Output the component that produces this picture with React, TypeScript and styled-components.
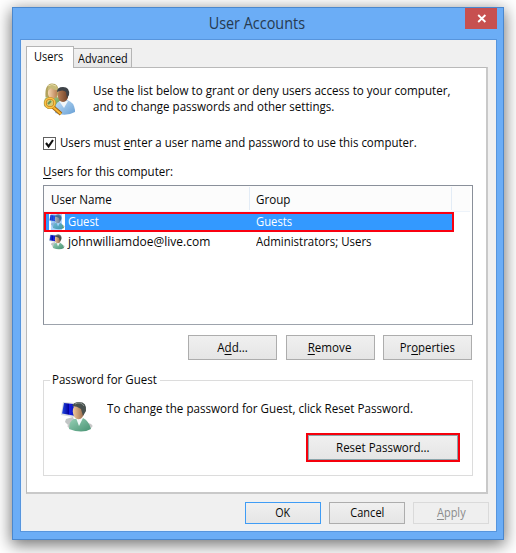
import React from 'react';
import styled, { createGlobalStyle, css } from 'styled-components';

const Page = createGlobalStyle`
  * { box-sizing: border-box; }
  body { margin: 0; background: #fff; overflow: hidden; }
  u { text-decoration-thickness: 1px; text-underline-offset: 2px; }
`;

const Desktop = styled.div`
  width: 516px;
  height: 553px;
  padding: 7px 0 0 12px;
  font: 12.5px/16px 'Open Sans', 'Noto Sans', sans-serif;
  color: #080808;
  white-space: nowrap;
  overflow: hidden;
`;

const Window = styled.div`
  width: 492px;
  height: 533px;
  display: flex;
  flex-direction: column;
  padding: 0 6px 7px 7px;
  background: #6badf6;
  border: 1px solid #4a87cd;
  box-shadow: 0 4px 15px 1px rgba(0, 0, 0, 0.55);
`;

const TitleBar = styled.header`
  height: 31px;
  display: grid;
  grid-template-columns: 1fr auto 1fr;
  align-items: start;
`;

const Title = styled.h1`
  grid-column: 2;
  margin: 0;
  padding: 4px 4px 0 0;
  font-size: 15.5px;
  font-weight: 400;
  line-height: 22px;
  color: #263a50;
`;

const Close = styled.button`
  justify-self: end;
  width: 32px;
  height: 21px;
  padding: 0 0 0 1px;
  border: 0;
  background: #c75050;
  display: flex;
  align-items: center;
  justify-content: center;
`;

const Client = styled.main`
  flex: 1;
  display: flex;
  flex-direction: column;
  padding: 6px 7px 0 5px;
  background: #f0f0f0;
  border: 1px solid #5795dd;
  box-shadow: inset 1px -1px #e9f1f9;
`;

const Tabs = styled.nav`
  display: flex;
  align-items: flex-end;
  height: 22px;
  position: relative;
  z-index: 1;
`;

const Tab = styled.div<{ $active?: boolean }>`
  border: 1px solid #b5b5b5;
  ${p => p.$active ? css`
    width: 48px;
    height: 22px;
    padding: 2px 0 0 7px;
    border-bottom: 0;
    background: #fff;
  ` : css`
    width: 58px;
    height: 20px;
    padding: 2px 0 0 4px;
    border-left: 0;
    background: linear-gradient(#f1f1f1, #e8e8e8);
  `}
`;

const Panel = styled.section`
  width: 462px;
  height: 427px;
  margin-top: -1px;
  padding: 15px 0 0 16px;
  background: #fff;
  border: 1px solid #b9b9b9;
  border-right: 2px solid #c9c9c9;
  border-bottom: 2px solid #c9c9c9;
`;

/* Condensed run of text: the installed face is wider than the dialog's UI font. */
const Text = styled.span<{ $scale?: number; $centered?: boolean }>`
  display: inline-block;
  width: max-content;
  transform: scaleX(${p => p.$scale ?? 0.93});
  transform-origin: ${p => p.$centered ? 'center' : 'left'};
`;

const Intro = styled.div`
  display: flex;
  gap: 17px;
  height: 53px;
`;

const IntroCopy = styled.p`
  margin: 0;
  display: flex;
  flex-direction: column;
  line-height: 15.5px;
`;

const CheckRow = styled.div`
  display: flex;
  align-items: center;
  gap: 4px;
  height: 14px;
`;

const CheckBox = styled.span`
  width: 13px;
  height: 13px;
  border: 1px solid #606060;
  background: #fff;
  display: flex;
`;

const ListLabel = styled.div`
  margin-top: 14px;
  height: 21px;
  line-height: 16px;
`;

const UserList = styled.div`
  width: 430px;
  height: 140px;
  border: 1px solid #8a909a;
  border-bottom-color: #9da3ac;
`;

const columns = css`
  display: grid;
  grid-template-columns: 205px 1fr;
  align-items: center;
`;

const ListHeader = styled.div`
  ${columns}
  height: 26px;
  margin-right: 2px;
  padding-left: 1px;
  background: #fcfcfc;
  border-bottom: 1px solid #edf3fa;
`;

const HeaderCell = styled.div`
  height: 23px;
  padding: 5px 0 0 6px;
  border-right: 1px solid #e3ecf6;
  &:last-child { margin-right: 18px; }
`;

const UserRow = styled.div<{ $selected?: boolean }>`
  ${columns}
  width: 410px;
  height: 20px;
  padding-left: ${p => p.$selected ? 3 : 5}px;
  color: ${p => p.$selected ? '#fff' : '#080808'};
  background: ${p => p.$selected ? '#3399ff' : '#fff'};
  border: ${p => p.$selected ? '2px solid #fa0010' : '0'};
`;

const UserCell = styled.div`
  display: flex;
  align-items: center;
  gap: 3px;
  height: 16px;
`;

const GroupCell = styled.div`
  padding-left: 2px;
`;

const Actions = styled.div`
  display: flex;
  justify-content: flex-end;
  gap: 8.5px;
  width: 429px;
  margin-top: 10px;
`;

const Button = styled.button<{ $w: number; $h: number; $kind?: 'default' | 'disabled' | 'marked' }>`
  width: ${p => p.$w}px;
  height: ${p => p.$h}px;
  padding: 0;
  font: inherit;
  line-height: 16px;
  color: ${p => p.$kind === 'disabled' ? '#8b8b8b' : '#080808'};
  border: 1px solid ${p => p.$kind === 'default' ? '#3f9cf5' : p.$kind === 'disabled' ? '#dadada' : '#adadad'};
  background: ${p => p.$kind === 'disabled' ? '#efefef' : 'linear-gradient(#f0f0f0, #e5e5e5)'};
  ${p => p.$kind === 'marked' && css`
    border-color: #8ba5ab;
    outline: 2px solid #f5000c;
  `}
`;

const PasswordGroup = styled.fieldset`
  width: 430px;
  height: 104px;
  margin: 12px 0 0;
  padding: 13px 14px 0 17px;
  border: 1px solid #dcdcdc;
  min-width: 0;
`;

const Legend = styled.legend`
  width: 110px;
  height: 16px;
  margin-left: -11px;
  padding: 0 2px;
`;

const PasswordInfo = styled.div`
  display: flex;
  gap: 14px;
  height: 34px;
`;

const ResetRow = styled.div`
  display: flex;
  justify-content: flex-end;
`;

const Footer = styled.footer`
  display: flex;
  justify-content: flex-end;
  gap: 8px;
  padding-top: 8px;
`;

function UsersIcon() {
  return (
    <svg width="33" height="34" viewBox="0 0 33 34">
      <defs>
        <linearGradient id="skinA"><stop stopColor="#f7d9b4" /><stop offset="1" stopColor="#b98054" /></linearGradient>
        <linearGradient id="skinB"><stop stopColor="#b87e55" /><stop offset="1" stopColor="#6e4028" /></linearGradient>
        <linearGradient id="blue" x2="1" y2="1"><stop stopColor="#c5e1f8" /><stop offset="1" stopColor="#679fd5" /></linearGradient>
        <linearGradient id="green" x2="1" y2="1"><stop stopColor="#c0dca2" /><stop offset="1" stopColor="#55914c" /></linearGradient>
      </defs>
      <path d="M1 23Q0 17 3 14l7-2 8 4v9L5 26Z" fill="url(#green)" />
      <path d="M2.5 14Q1.5 1 9 .5 16 .5 15.5 9L14 15Z" fill="#b2a25d" />
      <ellipse cx="9.5" cy="9.8" rx="4.6" ry="6" fill="url(#skinA)" />
      <path d="M4.5 7Q5 2 10 2q5 0 5 5-5 0-7-2-1 2-3.500 2Z" fill="#c8bb7a" />
      <path d="M5 3Q9 0 13 3" stroke="#e5dda8" fill="none" />
      <path d="M12 30Q11 20 17 18l7-1q7 2 8 10v2Q23 34 12 30Z" fill="url(#blue)" />
      <path d="m16 18 5 7 4-7Z" fill="#f1f6f9" />
      <ellipse cx="20" cy="12" rx="5.300" ry="7" fill="url(#skinB)" />
      <path d="M14 9Q14 4 20 4q7 0 6 8l-2 3-1-6q-3-3-9 0Z" fill="#3e4248" />
      <path d="m10 24 8 7" stroke="#9d6010" strokeWidth="3.8" />
      <path d="m10 24 8 7" stroke="#f6b533" strokeWidth="2.2" />
      <circle cx="7" cy="20" r="4.6" fill="#d6cb73" stroke="#ce8319" strokeWidth="2.6" />
      <circle cx="7" cy="20" r="4.8" fill="none" stroke="#f8c64a" strokeWidth="1.4" />
      <path d="m5 21 3-3" stroke="#64925b" strokeWidth="2" />
    </svg>
  );
}

function AccountIcon({ size, selected = false }: { size: number; selected?: boolean }) {
  return (
    <svg width={size} height={size} viewBox="0 0 32 32">
      <defs>
        <linearGradient id="screen"><stop stopColor="#254ce1" /><stop offset=".48" stopColor="#0000a0" /><stop offset=".54" stopColor="#171de8" /><stop offset="1" stopColor="#071ba1" /></linearGradient>
        <linearGradient id="face"><stop stopColor="#f1c99c" /><stop offset="1" stopColor="#936545" /></linearGradient>
        <linearGradient id="shirt" x2="1" y2="1"><stop stopColor="#9ad2b8" /><stop offset="1" stopColor="#459171" /></linearGradient>
      </defs>
      {selected && <path fill="#fff" d="M0 0h32v32H0z" />}
      <ellipse cx="19" cy="25" rx="12.5" ry="4" fill="#aaaaaa" opacity=".65" />
      <path d="m5 18 7-2 2 5-7 3-3-3Z" fill="#c1c5c5" />
      <path d="M2 1 14 2l3 15L0 14Z" fill="#d9dde1" />
      <path d="m3 2 9 1 3 12L1 12.5Z" fill="url(#screen)" />
      <path d="M8 28Q8 20 13 18l9-1q6 3 8 11-9 5-22 0Z" fill="url(#shirt)" />
      <path d="m15 17 3 8 4-8Z" fill="#f3fafa" />
      <ellipse cx="17.5" cy="10.5" rx="5.7" ry="7.8" fill="url(#face)" />
      <path d="M11 5Q13 1 18 1q8 0 7 9l-3 5-2-7q-4-3-9-3Z" fill="#48504e" />
      <path d="M14 3q6-3 9 2" fill="none" stroke="#8d9690" />
      {selected && <path fill="#3399ff" opacity=".4" d="M4 0h22v32H4z" />}
    </svg>
  );
}

export default function App() {
  return (
    <Desktop>
      <Page />
      <Window>
        <TitleBar>
          <Title><Text $centered>User Accounts</Text></Title>
          <Close aria-label="Close">
            <svg width="10" height="9" viewBox="0 0 10 9"><path d="m1.2 1 7.2 7M8.4 1 1.2 8" stroke="#fff" strokeWidth="1.8" /></svg>
          </Close>
        </TitleBar>
        <Client>
          <Tabs>
            <Tab $active><Text $scale={0.88}>Users</Text></Tab>
            <Tab><Text $scale={0.87}>Advanced</Text></Tab>
          </Tabs>
          <Panel>
            <Intro>
              <UsersIcon />
              <IntroCopy>
                <Text>Use the list below to grant or deny users access to your computer,</Text>
                <Text $scale={0.925}>and to change passwords and other settings.</Text>
              </IntroCopy>
            </Intro>
            <CheckRow>
              <CheckBox><svg width="11" height="11" viewBox="0 0 11 11"><path d="m2 5 2.6 3.4L9 2" fill="none" stroke="#111" strokeWidth="2.1" /></svg></CheckBox>
              <Text $scale={0.918}>Users must <u>e</u>nter a user name and password to use this computer.</Text>
            </CheckRow>
            <ListLabel><Text $scale={0.92}><u>U</u>sers for this computer:</Text></ListLabel>
            <UserList>
              <ListHeader>
                <HeaderCell><Text>User Name</Text></HeaderCell>
                <HeaderCell><Text>Group</Text></HeaderCell>
              </ListHeader>
              <UserRow $selected>
                <UserCell><AccountIcon size={16} selected /><Text $scale={0.9}>Guest</Text></UserCell>
                <GroupCell><Text $scale={0.9}>Guests</Text></GroupCell>
              </UserRow>
              <UserRow>
                <UserCell><AccountIcon size={16} /><Text $scale={0.96}>johnwilliamdoe@live.com</Text></UserCell>
                <GroupCell><Text $scale={0.915}>Administrators; Users</Text></GroupCell>
              </UserRow>
            </UserList>
            <Actions>
              <Button $w={89} $h={25}><Text $centered>A<u>d</u>d...</Text></Button>
              <Button $w={89} $h={25}><Text $centered><u>R</u>emove</Text></Button>
              <Button $w={89} $h={25}><Text $centered $scale={0.91}>Pr<u>o</u>perties</Text></Button>
            </Actions>
            <PasswordGroup>
              <Legend><Text $scale={0.92}>Password for Guest</Text></Legend>
              <PasswordInfo>
                <AccountIcon size={32} />
                <Text>To change the password for Guest, click Reset Password.</Text>
              </PasswordInfo>
              <ResetRow><Button $w={150} $h={25} $kind="marked"><Text $centered $scale={0.92}>Reset Password...</Text></Button></ResetRow>
            </PasswordGroup>
          </Panel>
          <Footer>
            <Button $w={76} $h={22} $kind="default"><Text $centered $scale={0.86}>OK</Text></Button>
            <Button $w={76} $h={22}><Text $centered $scale={0.88}>Cancel</Text></Button>
            <Button $w={76} $h={22} $kind="disabled"><Text $centered $scale={0.88}><u>A</u>pply</Text></Button>
          </Footer>
        </Client>
      </Window>
    </Desktop>
  );
}
